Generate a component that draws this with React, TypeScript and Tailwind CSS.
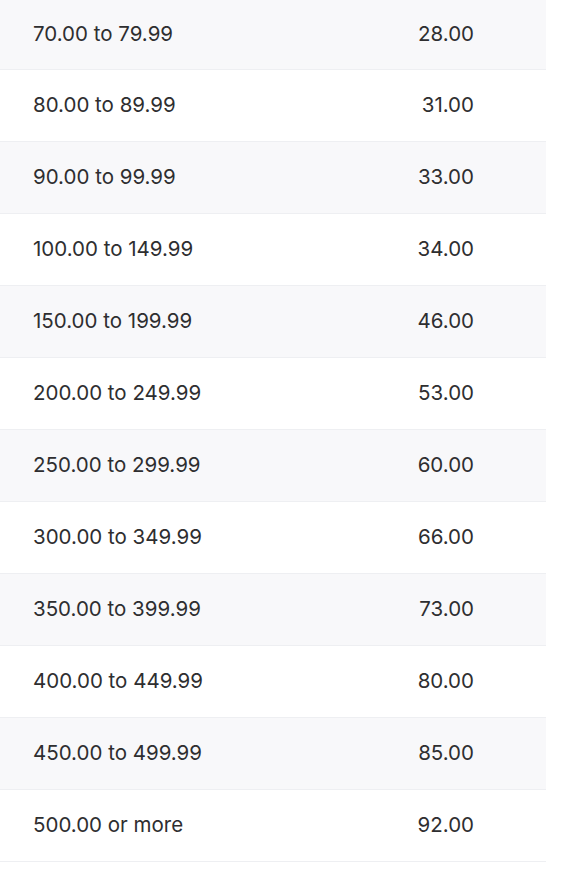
const rows: [string, string][] = [
  ['70.00 to 79.99', '28.00'],
  ['80.00 to 89.99', '31.00'],
  ['90.00 to 99.99', '33.00'],
  ['100.00 to 149.99', '34.00'],
  ['150.00 to 199.99', '46.00'],
  ['200.00 to 249.99', '53.00'],
  ['250.00 to 299.99', '60.00'],
  ['300.00 to 349.99', '66.00'],
  ['350.00 to 399.99', '73.00'],
  ['400.00 to 449.99', '80.00'],
  ['450.00 to 499.99', '85.00'],
  ['500.00 or more', '92.00'],
];

export default function App() {
  return (
    <div className="min-h-screen bg-white font-['Inter',sans-serif] text-[#2e2e30]">
      <div className="w-[546px]">
        {rows.map(([range, fee], i) => (
          <div
            key={range}
            className={`grid grid-cols-[1fr_auto] items-center border-b border-[#eeeff2] pl-[33px] pr-[72px] text-[20.5px] ${
              i === 0 ? 'h-[70px]' : 'h-[72px]'
            } ${i % 2 === 0 ? 'bg-[#f8f8fa]' : 'bg-white'}`}
          >
            <span>{range}</span>
            <span className="text-right">{fee}</span>
          </div>
        ))}
      </div>
    </div>
  );
}
